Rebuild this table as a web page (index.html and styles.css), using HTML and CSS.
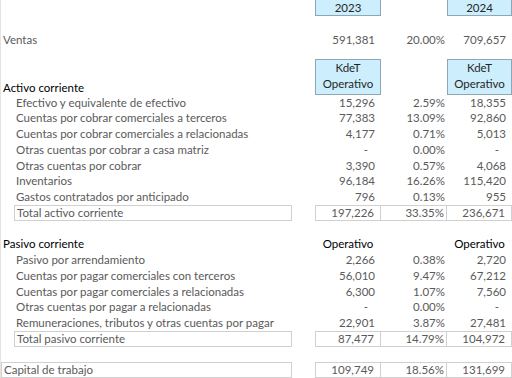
FILE: index.html
```html
<!DOCTYPE html>
<html lang="es">
<head>
<meta charset="utf-8">
<title>Capital de trabajo</title>
<link rel="stylesheet" href="styles.css">
</head>
<body>
<div class="sheet">
  <div class="row">
    <div class="c-lbl0"></div>
    <div class="c-n1 hdr">2023</div>
    <div class="c-n2"></div>
    <div class="c-n3 hdr">2024</div>
  </div>
  <div class="row"></div>
  <div class="row">
    <div class="c-lbl0 lbl">Ventas</div>
    <div class="c-n1 num">591,381</div>
    <div class="c-n2 pct">20.00%</div>
    <div class="c-n3 num">709,657</div>
  </div>
  <div class="row"></div>
  <div class="row tall">
    <div class="c-lbl0 head bottom">Activo corriente</div>
    <div class="c-n1 hdr two">KdeT<br>Operativo</div>
    <div class="c-n2"></div>
    <div class="c-n3 hdr two">KdeT<br>Operativo</div>
  </div>
  <div class="row">
    <div class="c-lbl lbl">Efectivo y equivalente de efectivo</div>
    <div class="c-n1 num">15,296</div>
    <div class="c-n2 pct">2.59%</div>
    <div class="c-n3 num">18,355</div>
  </div>
  <div class="row">
    <div class="c-lbl lbl">Cuentas por cobrar comerciales a terceros</div>
    <div class="c-n1 num">77,383</div>
    <div class="c-n2 pct">13.09%</div>
    <div class="c-n3 num">92,860</div>
  </div>
  <div class="row">
    <div class="c-lbl lbl">Cuentas por cobrar comerciales a relacionadas</div>
    <div class="c-n1 num">4,177</div>
    <div class="c-n2 pct">0.71%</div>
    <div class="c-n3 num">5,013</div>
  </div>
  <div class="row">
    <div class="c-lbl lbl">Otras cuentas por cobrar a casa matriz</div>
    <div class="c-n1 num dash">-</div>
    <div class="c-n2 pct">0.00%</div>
    <div class="c-n3 num dash">-</div>
  </div>
  <div class="row">
    <div class="c-lbl lbl">Otras cuentas por cobrar</div>
    <div class="c-n1 num">3,390</div>
    <div class="c-n2 pct">0.57%</div>
    <div class="c-n3 num">4,068</div>
  </div>
  <div class="row">
    <div class="c-lbl lbl">Inventarios</div>
    <div class="c-n1 num">96,184</div>
    <div class="c-n2 pct">16.26%</div>
    <div class="c-n3 num">115,420</div>
  </div>
  <div class="row">
    <div class="c-lbl lbl">Gastos contratados por anticipado</div>
    <div class="c-n1 num">796</div>
    <div class="c-n2 pct">0.13%</div>
    <div class="c-n3 num">955</div>
  </div>
  <div class="row">
    <div class="c-lbl lbl box">Total activo corriente</div>
    <div class="c-n1 num box">197,226</div>
    <div class="c-n2 pct box mid">33.35%</div>
    <div class="c-n3 num box end">236,671</div>
  </div>
  <div class="row"></div>
  <div class="row">
    <div class="c-lbl0 head">Pasivo corriente</div>
    <div class="c-n1 head center">Operativo</div>
    <div class="c-n2"></div>
    <div class="c-n3 head center">Operativo</div>
  </div>
  <div class="row">
    <div class="c-lbl lbl">Pasivo por arrendamiento</div>
    <div class="c-n1 num">2,266</div>
    <div class="c-n2 pct">0.38%</div>
    <div class="c-n3 num">2,720</div>
  </div>
  <div class="row">
    <div class="c-lbl lbl">Cuentas por pagar comerciales con terceros</div>
    <div class="c-n1 num">56,010</div>
    <div class="c-n2 pct">9.47%</div>
    <div class="c-n3 num">67,212</div>
  </div>
  <div class="row">
    <div class="c-lbl lbl">Cuentas por pagar comerciales a relacionadas</div>
    <div class="c-n1 num">6,300</div>
    <div class="c-n2 pct">1.07%</div>
    <div class="c-n3 num">7,560</div>
  </div>
  <div class="row">
    <div class="c-lbl lbl">Otras cuentas por pagar a relacionadas</div>
    <div class="c-n1 num dash">-</div>
    <div class="c-n2 pct">0.00%</div>
    <div class="c-n3 num dash">-</div>
  </div>
  <div class="row">
    <div class="c-lbl lbl">Remuneraciones, tributos y otras cuentas por pagar</div>
    <div class="c-n1 num">22,901</div>
    <div class="c-n2 pct">3.87%</div>
    <div class="c-n3 num">27,481</div>
  </div>
  <div class="row">
    <div class="c-lbl lbl box">Total pasivo corriente</div>
    <div class="c-n1 num box">87,477</div>
    <div class="c-n2 pct box mid">14.79%</div>
    <div class="c-n3 num box end">104,972</div>
  </div>
  <div class="row"></div>
  <div class="row">
    <div class="c-lbl0 lbl box">Capital de trabajo</div>
    <div class="c-n1 num box">109,749</div>
    <div class="c-n2 pct box mid">18.56%</div>
    <div class="c-n3 num box end">131,699</div>
  </div>
</div>
</body>
</html>
```
FILE: styles.css
```css
html, body {
  margin: 0;
  padding: 0;
  background: #ffffff;
}

.sheet {
  width: 512px;
  height: 378px;
  overflow: hidden;
  border-left: 1px solid #e4e4e4;
  box-sizing: border-box;
  font-family: "Lato", "Noto Sans", sans-serif;
  font-size: 11.5px;
  color: #5a5a5a;
}

.row {
  display: grid;
  grid-template-columns: 13px 278px 23px 66px 66px 65px;
  height: 15.75px;
  line-height: 15px;
}

.row.tall {
  height: 31.5px;
}

.c-lbl0 { grid-column: 1 / 3; padding-left: 2px; white-space: nowrap; }
.c-lbl { grid-column: 2 / 3; padding-left: 2px; white-space: nowrap; }
.c-n1 { grid-column: 4 / 5; }
.c-n2 { grid-column: 5 / 6; }
.c-n3 { grid-column: 6 / 7; }

.num { text-align: right; padding-right: 6px; }
.pct { text-align: right; padding-right: 2px; }
.dash { padding-right: 13px; }

.head { color: #000000; }
.bottom { align-self: end; }
.center { text-align: center; }

.hdr {
  background: #cdeefc;
  border: 1px solid #8fa6b4;
  border-top-width: 0;
  text-align: center;
  color: #262626;
  box-sizing: border-box;
}

.hdr.two {
  border-top-width: 1px;
  line-height: 16px;
  margin-top: -4px;
  padding-top: 0;
}

.box {
  border: 1px solid #d0d0d0;
  box-sizing: border-box;
  line-height: 13px;
}

.box.mid, .box.end { border-left: 0; }
```
